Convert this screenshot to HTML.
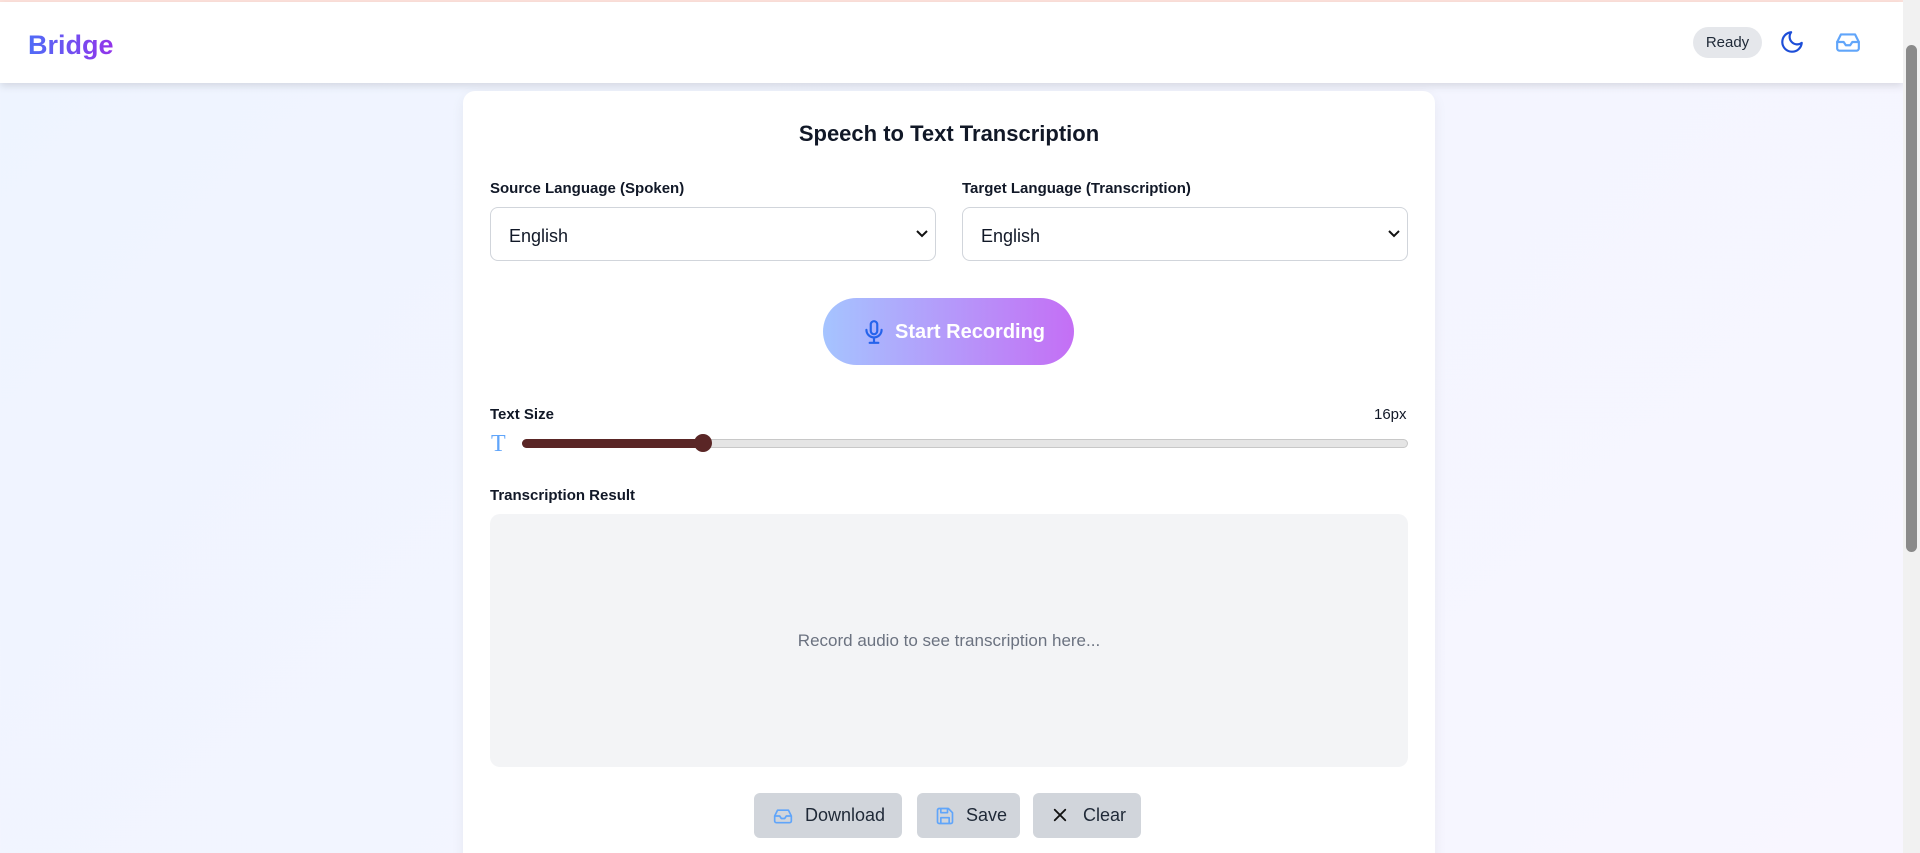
<!DOCTYPE html>
<html style="height:853px;overflow:hidden"><head><meta charset="utf-8"><style>
*{box-sizing:border-box;margin:0;padding:0}
body{width:1920px;height:853px;overflow:hidden;font-family:"Liberation Sans",sans-serif;background:linear-gradient(135deg,#eef4ff,#f8f6ff);position:relative;color:#111827}
.top{position:absolute;left:0;top:0;width:1903px;height:2px;background:#fde2dc}
header{position:absolute;left:0;top:2px;width:1903px;height:81px;background:#fff;box-shadow:0 3px 8px rgba(0,0,0,.12)}
.brand{position:absolute;left:28px;top:28px;font-size:27px;font-weight:700;background:linear-gradient(90deg,#4f6cf7,#9333ea);-webkit-background-clip:text;color:transparent}
.pill{position:absolute;left:1693px;top:25px;width:69px;height:31px;border-radius:16px;background:#e5e7eb;font-size:15px;line-height:31px;text-align:center;color:#1f2937}
.sb{position:absolute;left:1903px;top:0;width:17px;height:853px;background:#f1f1f1}
.sb i{position:absolute;left:3px;top:45px;width:11px;height:507px;border-radius:6px;background:#8a8a8a}
.card{position:absolute;left:463px;top:91px;width:972px;height:780px;background:#fff;border-radius:12px;box-shadow:0 4px 14px rgba(0,0,0,.06)}
.title{position:absolute;left:463px;top:121px;width:972px;text-align:center;font-size:22px;font-weight:700}
.lbl{position:absolute;font-size:15px;font-weight:700}
.sel{position:absolute;top:207px;width:446px;height:54px;border:1px solid #d1d5db;border-radius:8px;font-size:18px;padding:0 0 0 18px;line-height:56px}
.sel svg{position:absolute;right:6px;top:21px}
.rec{position:absolute;left:823px;top:298px;width:251px;height:67px;border-radius:34px;background:linear-gradient(90deg,#a5c4ff,#c46ff5);color:#fff;font-size:20px;font-weight:700;line-height:69px;padding-left:72px}
.rec svg{position:absolute;left:38px;top:20px}
.track{position:absolute;left:522px;top:439px;width:886px;height:9px;border-radius:5px;background:#e5e5e5;border:1px solid #c8c8c8}
.fill{position:absolute;left:522px;top:439px;width:184px;height:9px;border-radius:5px;background:#5a2626}
.thumb{position:absolute;left:694px;top:434px;width:18px;height:18px;border-radius:50%;background:#5a2626}
.box{position:absolute;left:490px;top:514px;width:918px;height:253px;background:#f3f4f6;border-radius:10px;text-align:center;line-height:253px;font-size:17px;color:#6b7280}
.btn{position:absolute;top:793px;height:45px;border-radius:6px;background:#d1d5db;font-size:18px;line-height:45px;color:#1f2937}
.btn svg{position:absolute;left:18px;top:13px}
</style></head><body>
<div class="top"></div>
<header>
<div class="brand">Bridge</div>
<div class="pill">Ready</div>
<svg style="position:absolute;left:1779px;top:27px" width="26" height="26" viewBox="0 0 24 24" fill="none" stroke="#1d4ed8" stroke-width="2" stroke-linecap="round" stroke-linejoin="round"><path d="M21 12.8A9 9 0 1 1 11.2 3a7 7 0 0 0 9.8 9.8z"/></svg>
<svg style="position:absolute;left:1834px;top:27px" width="28" height="26" viewBox="0 0 24 24" fill="none" stroke="#60a5fa" stroke-width="2" stroke-linecap="round" stroke-linejoin="round"><path d="M22 12h-6l-2 3h-4l-2-3H2"/><path d="M5.5 5h13L22 12v6a2 2 0 0 1-2 2H4a2 2 0 0 1-2-2v-6z"/></svg>
</header>
<div class="sb"><i></i></div>
<div class="card"></div>
<div class="title">Speech to Text Transcription</div>
<div class="lbl" style="left:490px;top:180px">Source Language (Spoken)</div>
<div class="lbl" style="left:962px;top:180px">Target Language (Transcription)</div>
<div class="sel" style="left:490px">English<svg width="14" height="10" viewBox="0 0 14 10"><path d="M2 2l5 5 5-5" stroke="#111" stroke-width="2" fill="none"/></svg></div>
<div class="sel" style="left:962px">English<svg width="14" height="10" viewBox="0 0 14 10"><path d="M2 2l5 5 5-5" stroke="#111" stroke-width="2" fill="none"/></svg></div>
<div class="rec"><svg width="26" height="28" viewBox="0 0 24 24" fill="none" stroke="#2563eb" stroke-width="2" stroke-linecap="round"><rect x="9" y="2" width="6" height="12" rx="3"/><path d="M5 10a7 7 0 0 0 14 0M12 17v5M8 22h8"/></svg>Start Recording</div>
<div class="lbl" style="left:490px;top:406px">Text Size</div>
<div style="position:absolute;left:1374px;top:406px;font-size:15px">16px</div>
<div style="position:absolute;left:491px;top:431px;font-size:24px;color:#60a5fa;font-family:'Liberation Serif',serif">T</div>
<div class="track"></div><div class="fill"></div><div class="thumb"></div>
<div class="lbl" style="left:490px;top:487px">Transcription Result</div>
<div class="box">Record audio to see transcription here...</div>
<div class="btn" style="left:754px;width:148px;padding-left:51px"><svg width="22" height="20" viewBox="0 0 24 24" fill="none" stroke="#60a5fa" stroke-width="2" stroke-linejoin="round"><path d="M22 12h-6l-2 3h-4l-2-3H2"/><path d="M5.5 5h13L22 12v6a2 2 0 0 1-2 2H4a2 2 0 0 1-2-2v-6z"/></svg>Download</div>
<div class="btn" style="left:917px;width:103px;padding-left:49px"><svg width="20" height="20" viewBox="0 0 24 24" fill="none" stroke="#60a5fa" stroke-width="2" stroke-linejoin="round"><path d="M5 3h11l5 5v11a2 2 0 0 1-2 2H5a2 2 0 0 1-2-2V5a2 2 0 0 1 2-2z"/><path d="M7 3v5h8V3M7 21v-7h10v7"/></svg>Save</div>
<div class="btn" style="left:1033px;width:108px;padding-left:50px"><svg width="18" height="18" viewBox="0 0 24 24" fill="none" stroke="#111" stroke-width="2.5" stroke-linecap="round"><path d="M5 5l14 14M19 5L5 19"/></svg>Clear</div>
</body></html>
